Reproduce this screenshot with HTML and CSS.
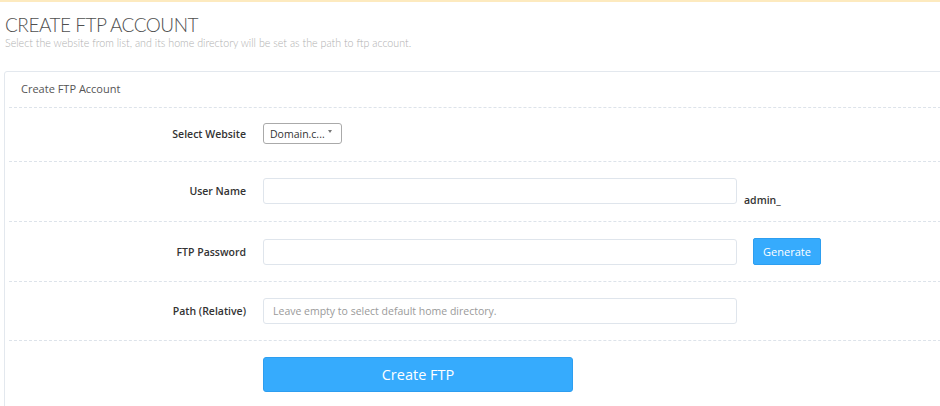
FILE: index.html
```html
<!DOCTYPE html>
<html>
<head>
<meta charset="utf-8">
<link rel="stylesheet" href="styles.css">
</head>
<body>
<div class="topbar"></div>
<div class="page">
  <h2 class="title">CREATE FTP ACCOUNT</h2>
  <p class="subtitle">Select the website from list, and its home directory will be set as the path to ftp account.</p>
  <div class="panel">
    <div class="panel-head">Create FTP Account</div>
    <form class="form">
      <div class="row first">
        <label class="label">Select Website</label>
        <div class="ctrl">
          <div class="select"><span>Domain.c...</span><span class="caret"></span></div>
        </div>
      </div>
      <div class="row tall">
        <label class="label">User Name</label>
        <div class="ctrl">
          <input class="input" type="text">
          <span class="suffix">admin_</span>
        </div>
      </div>
      <div class="row">
        <label class="label">FTP Password</label>
        <div class="ctrl">
          <input class="input" type="text">
          <button type="button" class="btn-gen">Generate</button>
        </div>
      </div>
      <div class="row">
        <label class="label">Path (Relative)</label>
        <div class="ctrl">
          <input class="input" type="text" placeholder="Leave empty to select default home directory.">
        </div>
      </div>
      <div class="row last">
        <span class="label"></span>
        <div class="ctrl">
          <button type="button" class="btn-create">Create FTP</button>
        </div>
      </div>
    </form>
  </div>
</div>
</body>
</html>
```
FILE: styles.css
```css
html, body {
  margin: 0;
  padding: 0;
  background: #fff;
  overflow: hidden;
}
body {
  font-family: "Open Sans", "DejaVu Sans", sans-serif;
  color: #333;
}
.topbar {
  height: 2px;
  background: #fdeabf;
}
.page {
  padding-left: 4px;
}
.title {
  margin: 11px 0 0 1px;
  font-family: Lato, "Open Sans", sans-serif;
  font-weight: 300;
  font-size: 19px;
  line-height: 24px;
  color: #505050;
  letter-spacing: -0.5px;
}
.subtitle {
  margin: -1px 0 0 1px;
  font-family: Lato, "Open Sans", sans-serif;
  font-weight: 300;
  font-size: 10.7px;
  line-height: 14px;
  color: #b0b0b0;
}
.panel {
  margin-top: 21px;
  width: 980px;
  border: 1px solid #e3e8ee;
  border-radius: 3px;
  height: 360px;
}
.panel-head {
  margin: 0 4px;
  height: 35px;
  line-height: 34px;
  padding-left: 12px;
  font-size: 11px;
  color: #555;
  border-bottom: 1px dashed #dde3ea;
}
.form {
  margin: 0 4px;
}
.row {
  display: grid;
  grid-template-columns: 237px 1fr;
  column-gap: 17px;
  align-items: center;
  padding: 16px 0 16px;
  border-bottom: 1px dashed #dde3ea;
}
.row.first {
  padding: 15px 0 17px;
}
.row.tall {
  padding: 16px 0 17px;
}
.row.last {
  border-bottom: none;
  padding: 16px 0;
}
.label {
  text-align: right;
  font-size: 10.5px;
  font-weight: 600;
  color: #333;
}
.ctrl {
  display: flex;
  align-items: center;
}
.select {
  box-sizing: border-box;
  width: 79px;
  height: 21px;
  border: 1px solid #aaa;
  border-radius: 3px;
  display: flex;
  align-items: center;
  justify-content: space-between;
  padding: 0 9px 0 6px;
  font-size: 10.5px;
  color: #333;
}
.caret {
  width: 0;
  height: 0;
  border-left: 2.5px solid transparent;
  border-right: 2.5px solid transparent;
  border-top: 3px solid #777;
  margin-bottom: 4px;
}
.input {
  box-sizing: border-box;
  width: 474px;
  height: 26px;
  border: 1px solid #dfe5ec;
  border-radius: 3px;
  padding: 0 9px;
  font-family: "Open Sans", sans-serif;
  font-size: 10.5px;
  color: #333;
  background: #fff;
  outline: none;
}
.input::placeholder {
  color: #9a9a9a;
}
.suffix {
  margin-left: 7px;
  align-self: flex-end;
  font-size: 10.5px;
  font-weight: 600;
  color: #333;
  line-height: 14px;
  margin-bottom: -3px;
}
.btn-gen {
  margin-left: 16px;
  box-sizing: border-box;
  width: 68px;
  height: 27px;
  border: 1px solid #2d9ef0;
  border-radius: 2px;
  background: #36abfd;
  color: #fff;
  font-family: "Open Sans", sans-serif;
  font-size: 11px;
  padding: 0;
}
.btn-create {
  box-sizing: border-box;
  width: 310px;
  height: 35px;
  border: 1px solid #2d9ef0;
  border-radius: 3px;
  background: #36abfd;
  color: #fff;
  font-family: "Open Sans", sans-serif;
  font-size: 14.5px;
  padding: 0;
}
```
